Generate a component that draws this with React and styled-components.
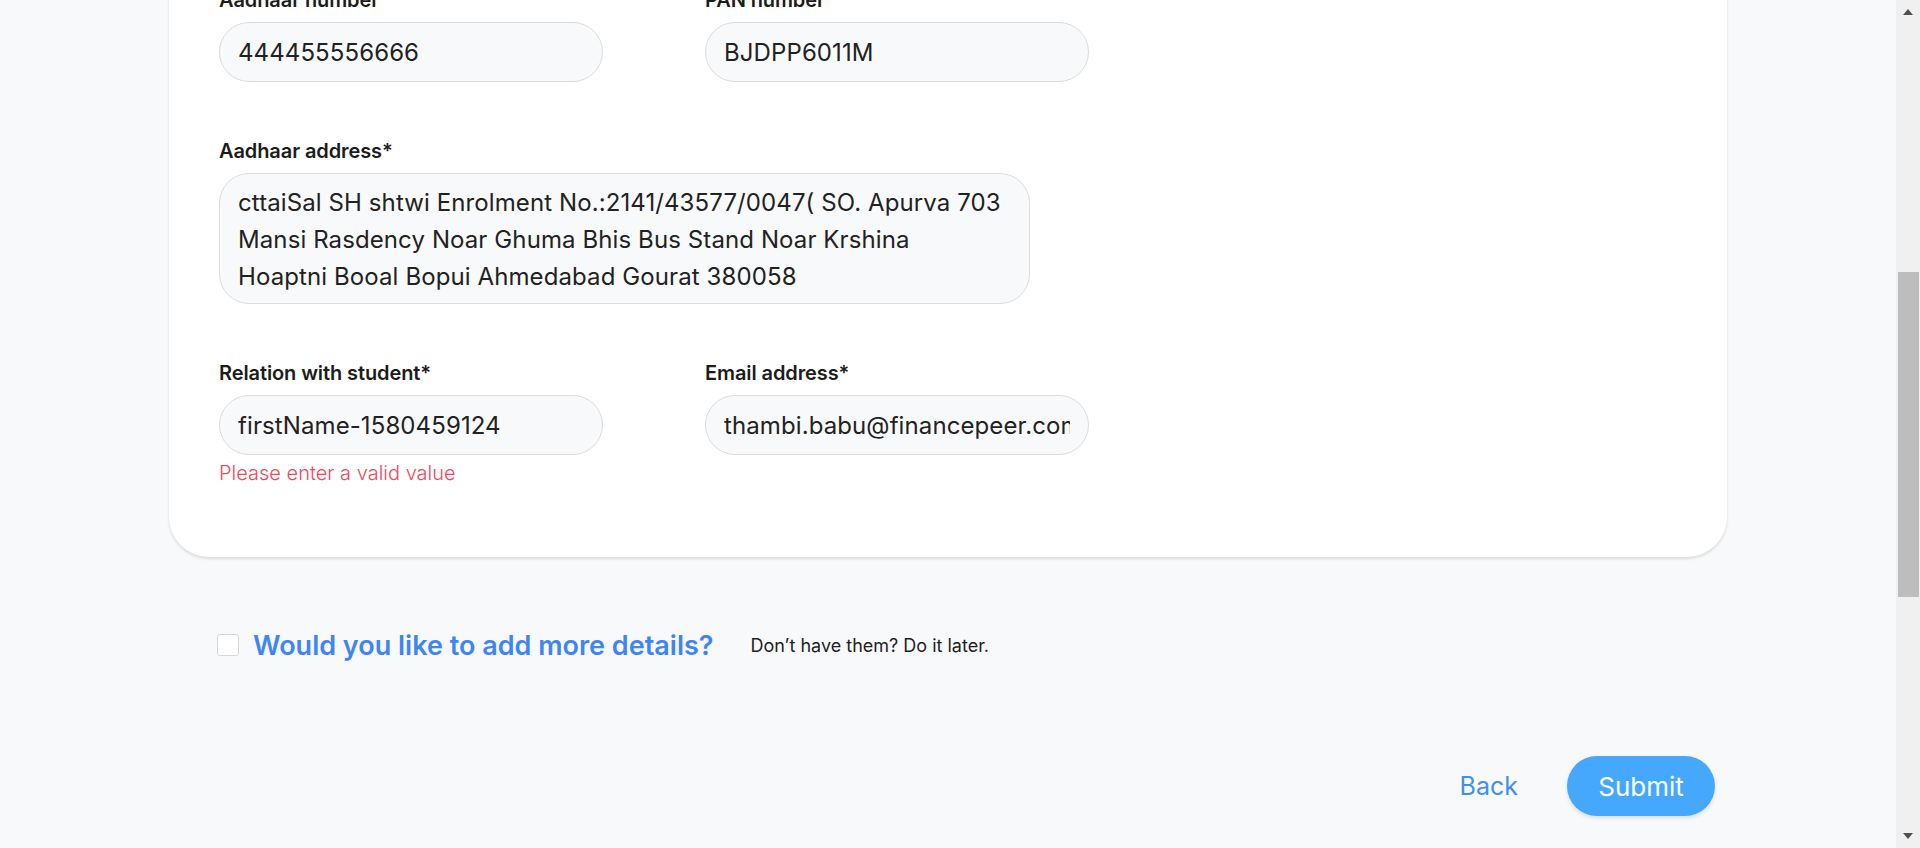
import React from 'react';
import styled, { createGlobalStyle } from 'styled-components';

const GlobalStyle = createGlobalStyle`
  html, body {
    margin: 0;
    height: 100%;
    overflow: hidden;
  }

  body {
    background: #f8f9fb;
    font-family: 'Inter', 'Noto Sans', sans-serif;
    color: #222;
  }

  #root {
    height: 100%;
  }
`;

// scroll state shown in the reference
const TRACK = 800;
const THUMB_TOP = 248;
const THUMB_HEIGHT = 325;

const ADDRESS = [
  'cttaiSal SH shtwi Enrolment No.:2141/43577/0047( SO. Apurva 703',
  'Mansi Rasdency Noar Ghuma Bhis Bus Stand Noar Krshina',
  'Hoaptni Booal Bopui Ahmedabad Gourat 380058',
].join('\n');

const App = () => (
  <Screen>
    <GlobalStyle />
    <Viewport>
      <Page>
        <Card>
          <Row>
            <Field>
              <Label htmlFor="aadhaar">Aadhaar number</Label>
              <Input id="aadhaar" defaultValue="444455556666" />
            </Field>
            <Field>
              <Label htmlFor="pan">PAN number</Label>
              <Input id="pan" defaultValue="BJDPP6011M" />
            </Field>
          </Row>

          <Row>
            <Field wide>
              <Label htmlFor="address">Aadhaar address*</Label>
              <TextArea id="address" wrap="off" defaultValue={ADDRESS} />
            </Field>
          </Row>

          <Row>
            <Field>
              <Label htmlFor="relation">Relation with student*</Label>
              <Input id="relation" defaultValue="firstName-1580459124" />
              <Error>Please enter a valid value</Error>
            </Field>
            <Field>
              <Label htmlFor="email">Email address*</Label>
              <Input id="email" defaultValue="thambi.babu@financepeer.com" />
            </Field>
          </Row>
        </Card>

        <MoreDetails>
          <Checkbox type="checkbox" id="more" />
          <MoreTitle htmlFor="more">Would you like to add more details?</MoreTitle>
          <Hint>Don’t have them? Do it later.</Hint>
        </MoreDetails>

        <Actions>
          <BackButton type="button">Back</BackButton>
          <SubmitButton type="button">Submit</SubmitButton>
        </Actions>
      </Page>
    </Viewport>

    <Scrollbar>
      <Arrow>
        <svg width="10" height="6" viewBox="0 0 10 6">
          <polygon points="0,6 5,0 10,6" fill="#505050" />
        </svg>
      </Arrow>
      <Track>
        <Thumb style={{ marginTop: THUMB_TOP, height: THUMB_HEIGHT }} />
      </Track>
      <Arrow>
        <svg width="10" height="6" viewBox="0 0 10 6">
          <polygon points="0,0 10,0 5,6" fill="#505050" />
        </svg>
      </Arrow>
    </Scrollbar>
  </Screen>
);

const Screen = styled.div`
  display: flex;
  height: 100vh;
  width: 100%;
`;

const Viewport = styled.main`
  flex: 1;
  overflow: hidden;
`;

const Page = styled.div`
  margin-top: -52px;
  padding: 0 169px;
`;

const Card = styled.section`
  display: flex;
  flex-direction: column;
  gap: 57px;
  background: #fff;
  border-radius: 40px;
  padding: 40px 50px 72px;
  box-shadow: 0 2px 3px rgba(0, 0, 0, 0.12);
`;

const Row = styled.div`
  display: flex;
  gap: 102px;
`;

const Field = styled.div`
  display: flex;
  flex-direction: column;
  gap: 10px;
  width: ${(props) => (props.wide ? '811px' : '384px')};
`;

const Label = styled.label`
  font-size: 20px;
  line-height: 24px;
  font-weight: 600;
  letter-spacing: -0.1px;
  color: #1c1c1c;
`;

const fieldBase = `
  box-sizing: border-box;
  width: 100%;
  font-family: 'Inter', 'Noto Sans', sans-serif;
  font-size: 24px;
  letter-spacing: 0.1px;
  color: #222;
  background: #f8f9fb;
  border: 1px solid #dcdcdc;
  outline: none;
`;

const Input = styled.input`
  ${fieldBase}
  height: 60px;
  padding: 0 18px;
  border-radius: 30px;
`;

const TextArea = styled.textarea`
  ${fieldBase}
  height: 131px;
  padding: 10px 18px;
  line-height: 37px;
  border-radius: 30px;
  resize: none;
  overflow: hidden;
  white-space: pre;
`;

const Error = styled.small`
  margin-top: -4px;
  font-size: 20px;
  line-height: 24px;
  font-weight: 300;
  letter-spacing: 0;
  color: #f2475c;
`;

const MoreDetails = styled.div`
  display: flex;
  align-items: center;
  height: 40px;
  margin-top: 68px;
  padding-left: 48px;
`;

const Checkbox = styled.input`
  appearance: none;
  width: 22px;
  height: 22px;
  margin: 0 14px 0 0;
  background: #fff;
  border: 1px solid #d6d6d6;
  border-radius: 3px;
`;

const MoreTitle = styled.label`
  font-size: 27px;
  font-weight: 600;
  letter-spacing: 0;
  color: #3f85f4;
`;

const Hint = styled.span`
  margin-left: 37px;
  font-size: 18px;
  color: #1f1f1f;
`;

const Actions = styled.div`
  display: flex;
  justify-content: flex-end;
  align-items: center;
  gap: 49px;
  margin-top: 91px;
  padding-right: 12px;
`;

const BackButton = styled.button`
  padding: 0;
  border: none;
  background: none;
  font-family: 'Inter', 'Noto Sans', sans-serif;
  font-size: 25px;
  color: #3f8ef5;
  cursor: pointer;
`;

const SubmitButton = styled.button`
  width: 148px;
  height: 60px;
  border: none;
  border-radius: 30px;
  background: #45a8fc;
  box-shadow: 0 2px 4px rgba(0, 0, 0, 0.12);
  font-family: 'Inter', 'Noto Sans', sans-serif;
  font-size: 26px;
  color: #fff;
  cursor: pointer;
`;

const Scrollbar = styled.div`
  display: flex;
  flex-direction: column;
  width: 24px;
  background: #f0f0f0;
`;

const Arrow = styled.div`
  display: flex;
  align-items: center;
  justify-content: center;
  height: 24px;
`;

const Track = styled.div`
  flex: 1;
  display: flex;
  flex-direction: column;
  align-items: center;
  height: ${TRACK}px;
`;

const Thumb = styled.div`
  width: 21px;
  background: #bdbdbd;
`;

export default App;
